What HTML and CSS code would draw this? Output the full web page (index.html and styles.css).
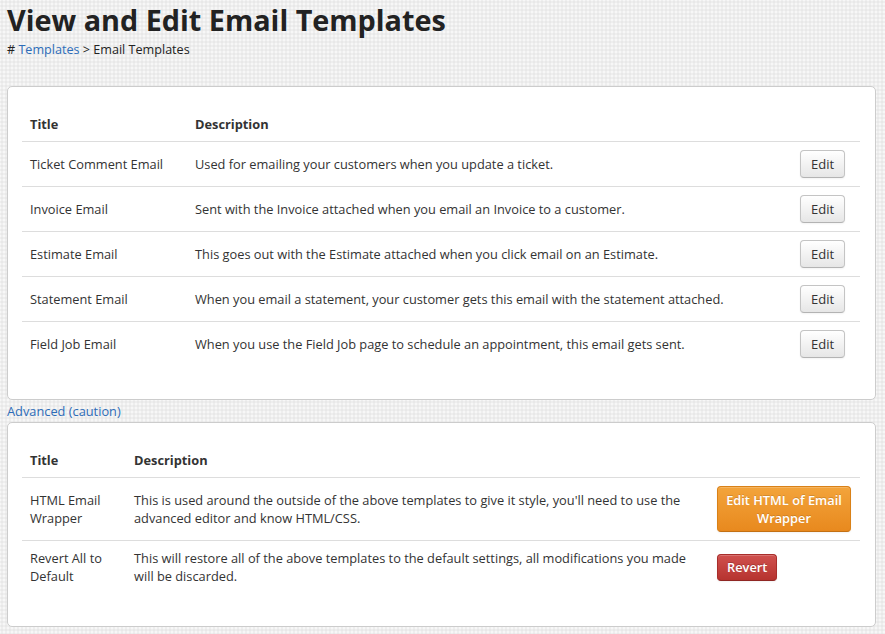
FILE: index.html
```html
<!DOCTYPE html>
<html>
<head>
<meta charset="utf-8">
<title>View and Edit Email Templates</title>
<link rel="stylesheet" href="styles.css">
</head>
<body>
<div class="page">
  <h1 class="page-title">View and Edit Email Templates</h1>
  <div class="breadcrumb"># <a href="#">Templates</a> &gt; Email Templates</div>

  <div class="panel panel-main">
    <table class="tpl-table">
      <colgroup>
        <col class="c-title1"><col class="c-desc1"><col class="c-act1">
      </colgroup>
      <thead>
        <tr><th>Title</th><th>Description</th><th></th></tr>
      </thead>
      <tbody>
        <tr><td>Ticket Comment Email</td><td>Used for emailing your customers when you update a ticket.</td><td><a class="btn" href="#">Edit</a></td></tr>
        <tr><td>Invoice Email</td><td>Sent with the Invoice attached when you email an Invoice to a customer.</td><td><a class="btn" href="#">Edit</a></td></tr>
        <tr><td>Estimate Email</td><td>This goes out with the Estimate attached when you click email on an Estimate.</td><td><a class="btn" href="#">Edit</a></td></tr>
        <tr><td>Statement Email</td><td>When you email a statement, your customer gets this email with the statement attached.</td><td><a class="btn" href="#">Edit</a></td></tr>
        <tr><td>Field Job Email</td><td>When you use the Field Job page to schedule an appointment, this email gets sent.</td><td><a class="btn" href="#">Edit</a></td></tr>
      </tbody>
    </table>
  </div>

  <a class="adv-link" href="#">Advanced (caution)</a>

  <div class="panel panel-adv">
    <table class="tpl-table">
      <colgroup>
        <col class="c-title2"><col class="c-desc2"><col class="c-act2">
      </colgroup>
      <thead>
        <tr><th>Title</th><th>Description</th><th></th></tr>
      </thead>
      <tbody>
        <tr><td>HTML Email Wrapper</td><td>This is used around the outside of the above templates to give it style, you'll need to use the advanced editor and know HTML/CSS.</td><td><a class="btn btn-warning" href="#">Edit HTML of Email Wrapper</a></td></tr>
        <tr><td>Revert All to Default</td><td>This will restore all of the above templates to the default settings, all modifications you made will be discarded.</td><td><a class="btn btn-danger" href="#">Revert</a></td></tr>
      </tbody>
    </table>
  </div>
</div>
</body>
</html>
```

FILE: styles.css
```css
html, body {
  margin: 0;
  padding: 0;
}
body {
  background-color: #eeeeee;
  background-image:
    radial-gradient(rgba(0,0,0,0.025) 1px, transparent 1px),
    radial-gradient(rgba(255,255,255,0.5) 1px, transparent 1px);
  background-size: 4px 4px, 4px 4px;
  background-position: 0 0, 2px 2px;
  font-family: "Open Sans", "Liberation Sans", sans-serif;
  font-size: 12.8px;
  line-height: 18px;
  color: #333333;
}
a {
  color: #2d6cb8;
  text-decoration: none;
}
.page {
  padding: 0 9px 0 7px;
}
.page-title {
  margin: 0;
  padding-top: 1px;
  font-size: 28.8px;
  line-height: 38px;
  font-weight: 700;
  color: #222222;
  letter-spacing: 0;
}
.breadcrumb {
  margin-top: 1px;
  font-size: 12.6px;
  line-height: 20px;
  color: #222222;
}
.panel {
  background: #ffffff;
  border: 1px solid #cccccc;
  border-radius: 5px;
  padding: 20px 15px 33px 14px;
}
.panel-main {
  margin-top: 26px;
}
.adv-link {
  display: block;
  line-height: 22px;
  padding-top: 0;
}
.tpl-table {
  width: 100%;
  border-collapse: collapse;
  table-layout: fixed;
}
.c-title1 { width: 165px; }
.c-act1 { width: 68px; }
.c-title2 { width: 104px; }
.c-act2 { width: 151px; }
.tpl-table th,
.tpl-table td {
  padding: 8px 8px;
  text-align: left;
  vertical-align: middle;
  line-height: 18px;
}
.tpl-table th {
  font-weight: 700;
  color: #333333;
  border-bottom: 1px solid #dddddd;
}
.tpl-table tbody tr + tr td {
  border-top: 1px solid #dddddd;
}
.btn {
  display: inline-block;
  box-sizing: border-box;
  height: 28px;
  padding: 4px 10px;
  line-height: 18px;
  font-size: 13px;
  color: #333333;
  text-align: center;
  background: linear-gradient(#ffffff, #e6e6e6);
  border: 1px solid #c4c4c4;
  border-bottom-color: #b3b3b3;
  border-radius: 4px;
  box-shadow: inset 0 1px 0 rgba(255,255,255,0.2), 0 1px 2px rgba(0,0,0,0.05);
}
.btn-warning {
  width: 134px;
  height: 46px;
  padding: 4px 3px;
  font-size: 12.8px;
  line-height: 18px;
  color: #ffffff;
  font-weight: 600;
  background: linear-gradient(#f3a43b, #e8891e);
  border-color: #d98118 #d98118 #c37014;
  text-shadow: 0 -1px 0 rgba(0,0,0,0.15);
}
.btn-danger {
  height: 27px;
  padding: 3px 9px;
  font-size: 12.8px;
  color: #ffffff;
  font-weight: 600;
  background: linear-gradient(#d0514e, #b6332f);
  border-color: #a82e2b #a82e2b #8f2623;
  text-shadow: 0 -1px 0 rgba(0,0,0,0.2);
}
```
